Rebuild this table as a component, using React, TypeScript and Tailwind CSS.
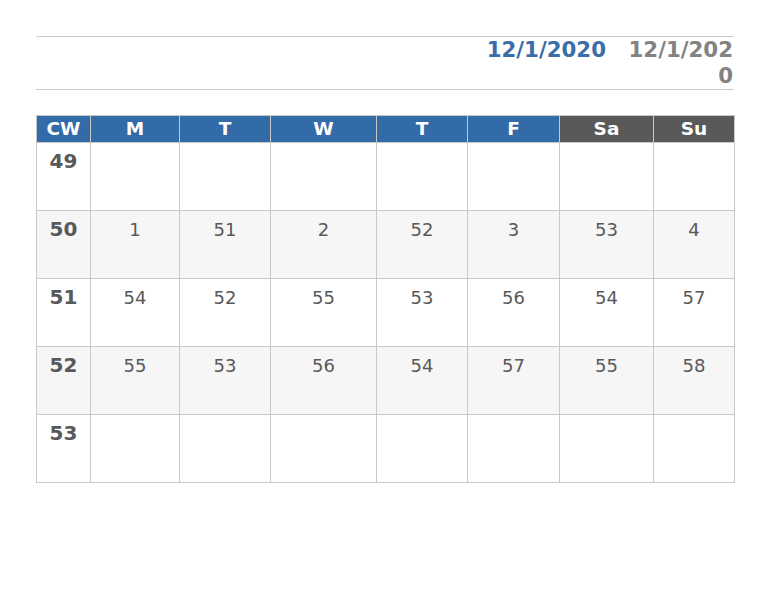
const days = [
  { label: "CW", tone: "blue" },
  { label: "M", tone: "blue" },
  { label: "T", tone: "blue" },
  { label: "W", tone: "blue" },
  { label: "T", tone: "blue" },
  { label: "F", tone: "blue" },
  { label: "Sa", tone: "gray" },
  { label: "Su", tone: "gray" },
];

const weeks: { cw: string; cells: string[] }[] = [
  { cw: "49", cells: ["", "", "", "", "", "", ""] },
  { cw: "50", cells: ["1", "51", "2", "52", "3", "53", "4"] },
  { cw: "51", cells: ["54", "52", "55", "53", "56", "54", "57"] },
  { cw: "52", cells: ["55", "53", "56", "54", "57", "55", "58"] },
  { cw: "53", cells: ["", "", "", "", "", "", ""] },
];

const App = () => {
  return (
    <div className="min-h-[594px] w-[768px] bg-white pt-[36px] pl-[36px] font-['DejaVu_Sans',sans-serif]">
      <div className="w-[698px]">
        {/* date range header */}
        <div className="flex h-[54px] items-start justify-end gap-[22px] border-y border-[#cbcbcb] pr-[1px] text-[21.3px] font-bold leading-[26px]">
          <span className="text-[#3a6ea8]">12/1/2020</span>
          <span className="w-[105px] break-all text-right text-[#828282]">12/1/2020</span>
        </div>

        <div className="mt-[25px] w-[699px] border-r border-b border-[#c8c8c8]">
          <div className="grid grid-cols-[54px_89px_91px_106px_91px_92px_94px_81px]">
            {days.map((d, i) => (
              <div
                key={i}
                className={`flex h-[27px] items-center justify-center border-t border-l border-[#c8c8c8] text-[18.5px] font-bold text-white ${
                  d.tone === "blue" ? "bg-[#336aa8]" : "bg-[#595959]"
                }`}
              >
                {d.label}
              </div>
            ))}
            {weeks.map((w, r) => (
              <div key={w.cw} className="contents">
                <div
                  className={`h-[68px] border-t border-l border-[#c8c8c8] pt-[5px] text-center text-[20px] leading-[27px] font-bold text-[#595959] ${
                    r % 2 === 1 ? "bg-[#f6f6f6]" : "bg-white"
                  }`}
                >
                  {w.cw}
                </div>
                {w.cells.map((c, j) => (
                  <div
                    key={j}
                    className={`h-[68px] border-t border-l border-[#c8c8c8] pt-[5px] text-center text-[18px] leading-[27px] text-[#595959] ${
                      r % 2 === 1 ? "bg-[#f6f6f6]" : "bg-white"
                    }`}
                  >
                    {c}
                  </div>
                ))}
              </div>
            ))}
          </div>
        </div>
      </div>
    </div>
  );
};

export default App;
